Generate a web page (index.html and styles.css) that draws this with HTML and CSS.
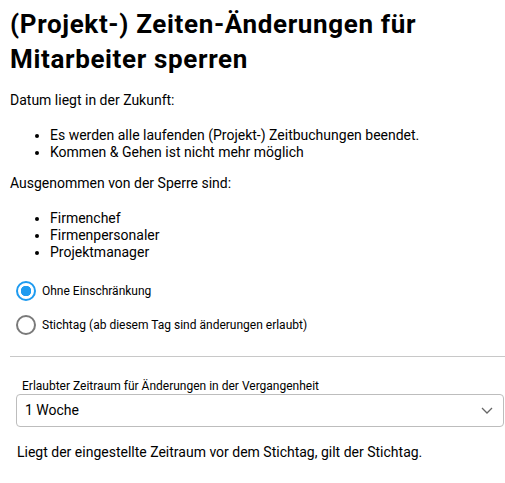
FILE: index.html
```html
<!DOCTYPE html>
<html lang="de">

<head>
    <meta charset="UTF-8">
    <meta name="viewport" content="width=device-width, initial-scale=1.0">
    <title>Zeiten sperren</title>
    <link rel="stylesheet" href="styles.css">
</head>

<body>
    <div class="panel">
        <h1 class="title">(Projekt-) Zeiten-Änderungen für Mitarbeiter sperren</h1>

        <p class="text">Datum liegt in der Zukunft:</p>
        <ul class="list">
            <li>Es werden alle laufenden (Projekt-) Zeitbuchungen beendet.</li>
            <li>Kommen &amp; Gehen ist nicht mehr möglich</li>
        </ul>

        <p class="text">Ausgenommen von der Sperre sind:</p>
        <ul class="list">
            <li>Firmenchef</li>
            <li>Firmenpersonaler</li>
            <li>Projektmanager</li>
        </ul>

        <div class="radios">
            <label class="radio">
                <input type="radio" name="mode" checked>
                <span class="dot"></span>
                <span>Ohne Einschränkung</span>
            </label>
            <label class="radio">
                <input type="radio" name="mode">
                <span class="dot"></span>
                <span>Stichtag (ab diesem Tag sind änderungen erlaubt)</span>
            </label>
        </div>
    </div>

    <hr class="divider">

    <div class="field">
        <label class="field-label" for="range">Erlaubter Zeitraum für Änderungen in der Vergangenheit</label>
        <div class="select" id="range">
            <span>1 Woche</span>
            <svg width="12" height="7" viewBox="0 0 12 7">
                <path d="M1 1 L6 6 L11 1" fill="none" stroke="#666" stroke-width="1.3" />
            </svg>
        </div>
    </div>

    <p class="note">Liegt der eingestellte Zeitraum vor dem Stichtag, gilt der Stichtag.</p>
</body>

</html>
```

FILE: styles.css
```css
body {
    margin: 0;
    padding: 0 0 0 10px;
    font-family: Roboto, Arial, sans-serif;
    font-size: 14px;
    color: #000;
    background-color: #fff;
}

.title {
    margin: 0;
    padding-top: 7px;
    font-size: 26px;
    font-weight: 700;
    line-height: 35px;
    letter-spacing: 0.65px;
    width: 480px;
}

.text {
    margin: 14px 0 0;
    line-height: 18px;
}

.list {
    margin: 18px 0 0;
    padding-left: 40px;
    line-height: 16.7px;
}

.list + .text {
    margin-top: 14px;
}

.radios {
    margin-top: 19px;
    display: flex;
    flex-direction: column;
    gap: 12px;
}

.radio {
    display: flex;
    align-items: center;
    gap: 6px;
    height: 22px;
    padding-left: 6px;
    font-size: 12px;
    cursor: pointer;
}

.radio input {
    display: none;
}

.dot {
    width: 16px;
    height: 16px;
    border: 2px solid #7a7a7a;
    border-radius: 50%;
    box-sizing: content-box;
}

.radio input:checked + .dot {
    border-color: #1e9bf0;
    background: radial-gradient(circle, #1e9bf0 0 5px, transparent 5.5px);
}

.divider {
    margin: 20px 0 0;
    border: none;
    border-top: 1px solid #c8c8c8;
}

.field {
    margin: 22px 1px 0 6px;
}

.field-label {
    display: block;
    padding-left: 6px;
    font-size: 12px;
    line-height: 14px;
    margin-bottom: 1px;
}

.select {
    display: flex;
    align-items: center;
    justify-content: space-between;
    height: 31px;
    padding: 0 10px 0 8px;
    border: 1px solid #bdbdbd;
    border-radius: 4px;
}

.note {
    margin: 17px 0 0 7px;
}
```
